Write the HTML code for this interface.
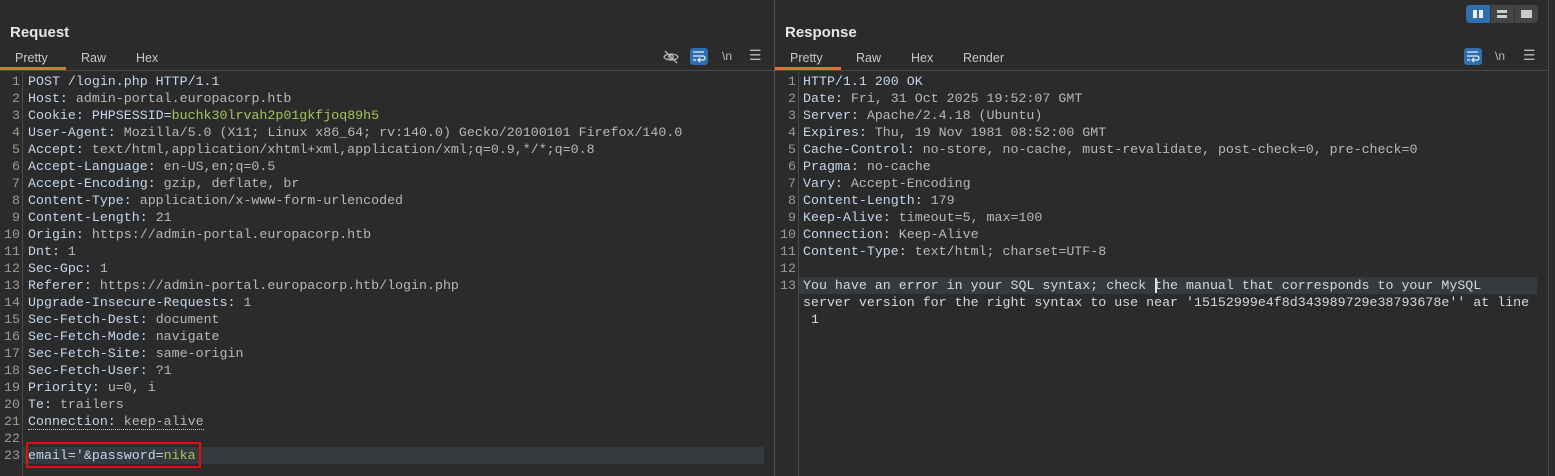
<!DOCTYPE html>
<html><head><meta charset="utf-8"><style>
*{margin:0;padding:0;box-sizing:border-box}
body{width:1555px;height:476px;background:#2b2b2b;font-family:"Liberation Sans",sans-serif;color:#d4d4d4;position:relative;overflow:hidden}
.t{position:absolute;font-size:15px;font-weight:bold;color:#e6e6e6}
.tab{position:absolute;font-size:12.5px;color:#c8c8c8;top:51px}
.ul{position:absolute;height:3px;background:#e2703a;top:67px}
.hl{position:absolute;height:1px;background:#4a4a4a;top:70px}
.vl{position:absolute;width:1px;background:#4a4a4a}
.code{position:absolute;font-family:"Liberation Mono",monospace;font-size:13.3px;line-height:17px;white-space:pre}
.ln{position:absolute;font-family:"Liberation Mono",monospace;font-size:13.3px;line-height:17px;color:#9a9a9a;text-align:right;white-space:pre}
.k{color:#c4d6ec}.v{color:#b8b8b8}.g{color:#a8c45a}
.ico{position:absolute;color:#b8b8b8;font-size:12px}
</style></head><body>
<div class="t" style="left:10px;top:24px">Request</div>
<div class="t" style="left:785px;top:24px">Response</div>
<div class="tab" style="left:15px">Pretty</div><div class="tab" style="left:81px">Raw</div><div class="tab" style="left:136px">Hex</div>
<div class="tab" style="left:790px">Pretty</div><div class="tab" style="left:856px">Raw</div><div class="tab" style="left:911px">Hex</div><div class="tab" style="left:963px">Render</div>
<div class="ul" style="left:0;width:66px"></div><div class="ul" style="left:775px;width:66px"></div>
<div class="hl" style="left:0;width:774px"></div><div class="hl" style="left:775px;width:773px"></div>
<div class="vl" style="left:774px;top:0;height:476px;background:#555"></div>
<div class="vl" style="left:22px;top:71px;height:405px"></div>
<div class="vl" style="left:798px;top:71px;height:405px"></div>
<div class="vl" style="left:1548px;top:0;height:476px"></div>
<!-- icons left -->
<svg style="position:absolute;left:663px;top:49px" width="16" height="16" viewBox="0 0 16 16" fill="none" stroke="#b8b8b8" stroke-width="1.3"><path d="M1 8c2-4 12-4 14 0c-2 4-12 4-14 0z"/><circle cx="8" cy="8" r="2.2"/><path d="M2 2l12 12"/></svg>
<div style="position:absolute;left:690px;top:48px;width:18px;height:17px;background:#2f6fb0;border-radius:3px"></div>
<svg style="position:absolute;left:692px;top:50px" width="14" height="13" viewBox="0 0 14 13" fill="none" stroke="#e8eef5" stroke-width="1.3"><path d="M1 2h11M1 6h10a2 2 0 010 4H7M1 10h3M8 8l-2 2 2 2"/></svg>
<div class="ico" style="left:722px;top:49px">\n</div>
<div class="ico" style="left:749px;top:47px;font-size:14px">☰</div>
<!-- icons right -->
<div style="position:absolute;left:1464px;top:48px;width:18px;height:17px;background:#2f6fb0;border-radius:3px"></div>
<svg style="position:absolute;left:1466px;top:50px" width="14" height="13" viewBox="0 0 14 13" fill="none" stroke="#e8eef5" stroke-width="1.3"><path d="M1 2h11M1 6h10a2 2 0 010 4H7M1 10h3M8 8l-2 2 2 2"/></svg>
<div class="ico" style="left:1495px;top:49px">\n</div>
<div class="ico" style="left:1523px;top:47px;font-size:14px">☰</div>
<!-- layout toggle -->
<div style="position:absolute;left:1466px;top:5px;width:72px;height:18px;background:#454545;border-radius:4px;overflow:hidden">
<div style="position:absolute;left:0;top:0;width:24px;height:18px;background:#2f6fb0"></div>
<div style="position:absolute;left:7px;top:5px;width:4px;height:8px;background:#eee"></div><div style="position:absolute;left:13px;top:5px;width:4px;height:8px;background:#eee"></div>
<div style="position:absolute;left:24px;top:0;width:1px;height:18px;background:#333"></div>
<div style="position:absolute;left:31px;top:5px;width:10px;height:3px;background:#ccc"></div><div style="position:absolute;left:31px;top:10px;width:10px;height:3px;background:#ccc"></div>
<div style="position:absolute;left:48px;top:0;width:1px;height:18px;background:#333"></div>
<div style="position:absolute;left:55px;top:5px;width:11px;height:8px;background:#ccc"></div>
</div>
<!-- highlight rows -->
<div style="position:absolute;left:23px;top:447px;width:741px;height:17px;background:#353a3f"></div>
<div style="position:absolute;left:799px;top:277px;width:738px;height:17px;background:#353a3f"></div>
<div style="position:absolute;left:26px;top:442px;width:175px;height:26px;border:2px solid #e01010"></div>
<div style="position:absolute;left:1155px;top:278px;width:2px;height:15px;background:#e0e0e0"></div>
<div class="ln" style="left:0;top:73px;width:20px">1
2
3
4
5
6
7
8
9
10
11
12
13
14
15
16
17
18
19
20
21
22
23</div>
<div class="code" style="left:28px;top:73px"><span class="k">POST /login.php HTTP/1.1</span>
<span class="k">Host:</span> <span class="v">admin-portal.europacorp.htb</span>
<span class="k">Cookie:</span> <span class="k">PHPSESSID=</span><span class="g">buchk30lrvah2p01gkfjoq89h5</span>
<span class="k">User-Agent:</span> <span class="v">Mozilla/5.0 (X11; Linux x86_64; rv:140.0) Gecko/20100101 Firefox/140.0</span>
<span class="k">Accept:</span> <span class="v">text/html,application/xhtml+xml,application/xml;q=0.9,*/*;q=0.8</span>
<span class="k">Accept-Language:</span> <span class="v">en-US,en;q=0.5</span>
<span class="k">Accept-Encoding:</span> <span class="v">gzip, deflate, br</span>
<span class="k">Content-Type:</span> <span class="v">application/x-www-form-urlencoded</span>
<span class="k">Content-Length:</span> <span class="v">21</span>
<span class="k">Origin:</span> <span class="v">https://admin-portal.europacorp.htb</span>
<span class="k">Dnt:</span> <span class="v">1</span>
<span class="k">Sec-Gpc:</span> <span class="v">1</span>
<span class="k">Referer:</span> <span class="v">https://admin-portal.europacorp.htb/login.php</span>
<span class="k">Upgrade-Insecure-Requests:</span> <span class="v">1</span>
<span class="k">Sec-Fetch-Dest:</span> <span class="v">document</span>
<span class="k">Sec-Fetch-Mode:</span> <span class="v">navigate</span>
<span class="k">Sec-Fetch-Site:</span> <span class="v">same-origin</span>
<span class="k">Sec-Fetch-User:</span> <span class="v">?1</span>
<span class="k">Priority:</span> <span class="v">u=0, i</span>
<span class="k">Te:</span> <span class="v">trailers</span>
<span style="border-bottom:1px dotted #ccc"><span class="k">Connection:</span> <span class="v">keep-alive</span></span>

<span class="k">email='&amp;password=</span><span class="g">nika</span></div>
<div class="ln" style="left:776px;top:73px;width:20px">1
2
3
4
5
6
7
8
9
10
11
12
13</div>
<div class="code" style="left:803px;top:73px"><span class="k">HTTP/1.1 200 OK</span>
<span class="k">Date:</span> <span class="v">Fri, 31 Oct 2025 19:52:07 GMT</span>
<span class="k">Server:</span> <span class="v">Apache/2.4.18 (Ubuntu)</span>
<span class="k">Expires:</span> <span class="v">Thu, 19 Nov 1981 08:52:00 GMT</span>
<span class="k">Cache-Control:</span> <span class="v">no-store, no-cache, must-revalidate, post-check=0, pre-check=0</span>
<span class="k">Pragma:</span> <span class="v">no-cache</span>
<span class="k">Vary:</span> <span class="v">Accept-Encoding</span>
<span class="k">Content-Length:</span> <span class="v">179</span>
<span class="k">Keep-Alive:</span> <span class="v">timeout=5, max=100</span>
<span class="k">Connection:</span> <span class="v">Keep-Alive</span>
<span class="k">Content-Type:</span> <span class="v">text/html; charset=UTF-8</span>

<span style="color:#d8d8d8">You have an error in your SQL syntax; check the manual that corresponds to your MySQL
server version for the right syntax to use near '15152999e4f8d343989729e38793678e'' at line
 1</span></div>
</body></html>
